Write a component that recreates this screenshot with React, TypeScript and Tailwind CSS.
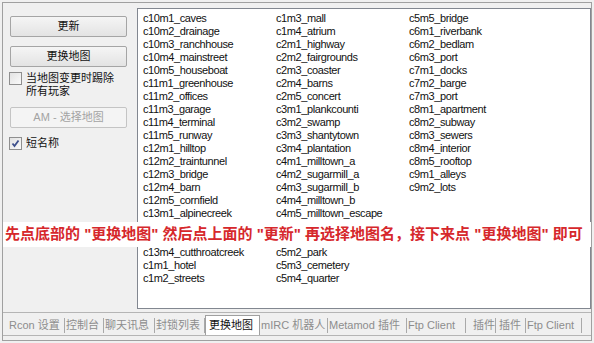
import React from 'react'

// rows 16 and 17 sit under the annotation banner, so they stay blank
const col1 = [
  'c10m1_caves', 'c10m2_drainage', 'c10m3_ranchhouse', 'c10m4_mainstreet', 'c10m5_houseboat',
  'c11m1_greenhouse', 'c11m2_offices', 'c11m3_garage', 'c11m4_terminal', 'c11m5_runway',
  'c12m1_hilltop', 'c12m2_traintunnel', 'c12m3_bridge', 'c12m4_barn', 'c12m5_cornfield',
  'c13m1_alpinecreek', '', '', 'c13m4_cutthroatcreek',
  'c1m1_hotel', 'c1m2_streets',
]

const col2 = [
  'c1m3_mall', 'c1m4_atrium', 'c2m1_highway', 'c2m2_fairgrounds', 'c2m3_coaster',
  'c2m4_barns', 'c2m5_concert', 'c3m1_plankcounti', 'c3m2_swamp', 'c3m3_shantytown',
  'c3m4_plantation', 'c4m1_milltown_a', 'c4m2_sugarmill_a', 'c4m3_sugarmill_b', 'c4m4_milltown_b',
  'c4m5_milltown_escape', '', '', 'c5m2_park',
  'c5m3_cemetery', 'c5m4_quarter',
]

const col3 = [
  'c5m5_bridge', 'c6m1_riverbank', 'c6m2_bedlam', 'c6m3_port', 'c7m1_docks', 'c7m2_barge',
  'c7m3_port', 'c8m1_apartment', 'c8m2_subway', 'c8m3_sewers', 'c8m4_interior', 'c8m5_rooftop',
  'c9m1_alleys', 'c9m2_lots',
]

const font = { fontFamily: '"Liberation Sans", "Noto Sans CJK SC", sans-serif' }

function WinButton({ label, disabled, className }: { label: string; disabled?: boolean; className?: string }) {
  return (
    <div
      className={
        'flex items-center justify-center h-[21px] w-[117px] rounded-[2px] border text-[11px] ' +
        (disabled
          ? 'border-[#c4c4c4] bg-[#f4f4f4] text-[#a3a3a3] '
          : 'border-[#a5a5a5] bg-gradient-to-b from-[#f5f5f5] to-[#e3e3e3] text-[#111] ') +
        (className || '')
      }
    >
      {label}
    </div>
  )
}

function CheckBox({ checked }: { checked?: boolean }) {
  return (
    <div className="w-[13px] h-[13px] shrink-0 border border-[#8f8f8f] bg-gradient-to-br from-[#e2e2e2] to-[#fafafa] flex items-center justify-center">
      {checked && (
        <svg width="9" height="9" viewBox="0 0 9 9">
          <path d="M1.5 4.5 L3.5 7 L7.5 1.5" stroke="#3d4f8c" strokeWidth="1.8" fill="none" />
        </svg>
      )}
    </div>
  )
}

const tabs = [
  { label: 'Rcon 设置', w: 'w-[58px]', pl: 'pl-[2px]' },
  { label: '控制台', w: 'w-[39px]', pl: 'pl-[1px]' },
  { label: '聊天讯息', w: 'w-[51px]', pl: 'pl-[1px]' },
  { label: '封锁列表', w: 'w-[50px]', pl: 'pl-[1px]' },
]

const tabs2 = [
  { label: 'mIRC 机器人', w: 'w-[68px]', pl: 'pl-[1px]' },
  { label: 'Metamod 插件', w: 'w-[79px]', pl: 'pl-[1px]' },
  { label: 'Ftp Client', w: 'w-[59px]', pl: 'pl-[1px]' },
  { label: '插件', w: 'w-[30px]', pl: 'pl-[7px]' },
  { label: '插件', w: 'w-[30px]', pl: 'pl-[3px]' },
  { label: 'Ftp Client', w: 'w-[56px]', pl: 'pl-[1px]' },
]

function Tab({ label, w, pl }: { label: string; w: string; pl: string }) {
  return (
    <div className={'h-[20px] shrink-0 flex items-center ' + w}>
      <span className={'flex-1 min-w-0 overflow-hidden whitespace-nowrap ' + pl}>{label}</span>
      <span className="w-px shrink-0 h-[15px] bg-[#a9a9a9]" />
    </div>
  )
}

export default function App() {
  return (
    <div className="relative w-[594px] h-[343px] bg-[#f0f0f0] p-[2px] overflow-hidden" style={font}>
      <div className="w-full h-full border border-[#a0a0a0] flex flex-col">
        <div className="flex h-[307px]">
          {/* left panel */}
          <div className="w-[134px] flex flex-col pl-[7px]">
            <WinButton label="更新" className="mt-[13px]" />
            <WinButton label="更换地图" className="mt-[9px]" />
            <div className="flex mt-[5px] -ml-[1px] gap-[4px]">
              <CheckBox />
              <div className="text-[11px] leading-[13px] text-[#111]">
                当地图变更时踢除
                <br />
                所有玩家
              </div>
            </div>
            <WinButton label="AM - 选择地图" disabled className="mt-[9px]" />
            <div className="flex items-center mt-[9px] -ml-[1px] gap-[4px]">
              <CheckBox checked />
              <div className="text-[11px] leading-[13px] text-[#111]">短名称</div>
            </div>
          </div>

          {/* map list */}
          <div className="mt-[5px] w-[454px] h-[301px] border border-[#828790] bg-white flex pl-[5px] pt-[3px] text-[11px] leading-[13px] tracking-[-0.4px] text-[#111]">
            {[col1, col2, col3].map((col, i) => (
              <div key={i} className="w-[133px] flex flex-col whitespace-nowrap">
                {col.map((m, j) => (
                  <div key={j} className="h-[13px]">{m}</div>
                ))}
              </div>
            ))}
          </div>
        </div>

        {/* bottom tabs */}
        <div className="mt-[2px] h-[24px] border-t border-b border-[#b5b5b5] flex items-end pl-[4px] text-[11px] text-[#8d8d8d]">
          {tabs.map((t) => (
            <Tab key={t.label} {...t} />
          ))}
          <div className="w-[55px] shrink-0 h-[20px] bg-white border border-b-0 border-[#a0a0a0] flex items-center pl-[3px] text-[#111] whitespace-nowrap">
            更换地图
          </div>
          {tabs2.map((t, i) => (
            <Tab key={i} {...t} />
          ))}
        </div>
      </div>

      {/* annotation banner */}
      <div className="absolute left-[3px] top-[222px] w-[588px] h-[25px] bg-white flex items-center pl-[2px] text-[15px] font-bold text-[#d6282c] whitespace-nowrap">
        先点底部的 "更换地图" 然后点上面的 "更新" 再选择地图名，接下来点 "更换地图" 即可
      </div>
    </div>
  )
}
